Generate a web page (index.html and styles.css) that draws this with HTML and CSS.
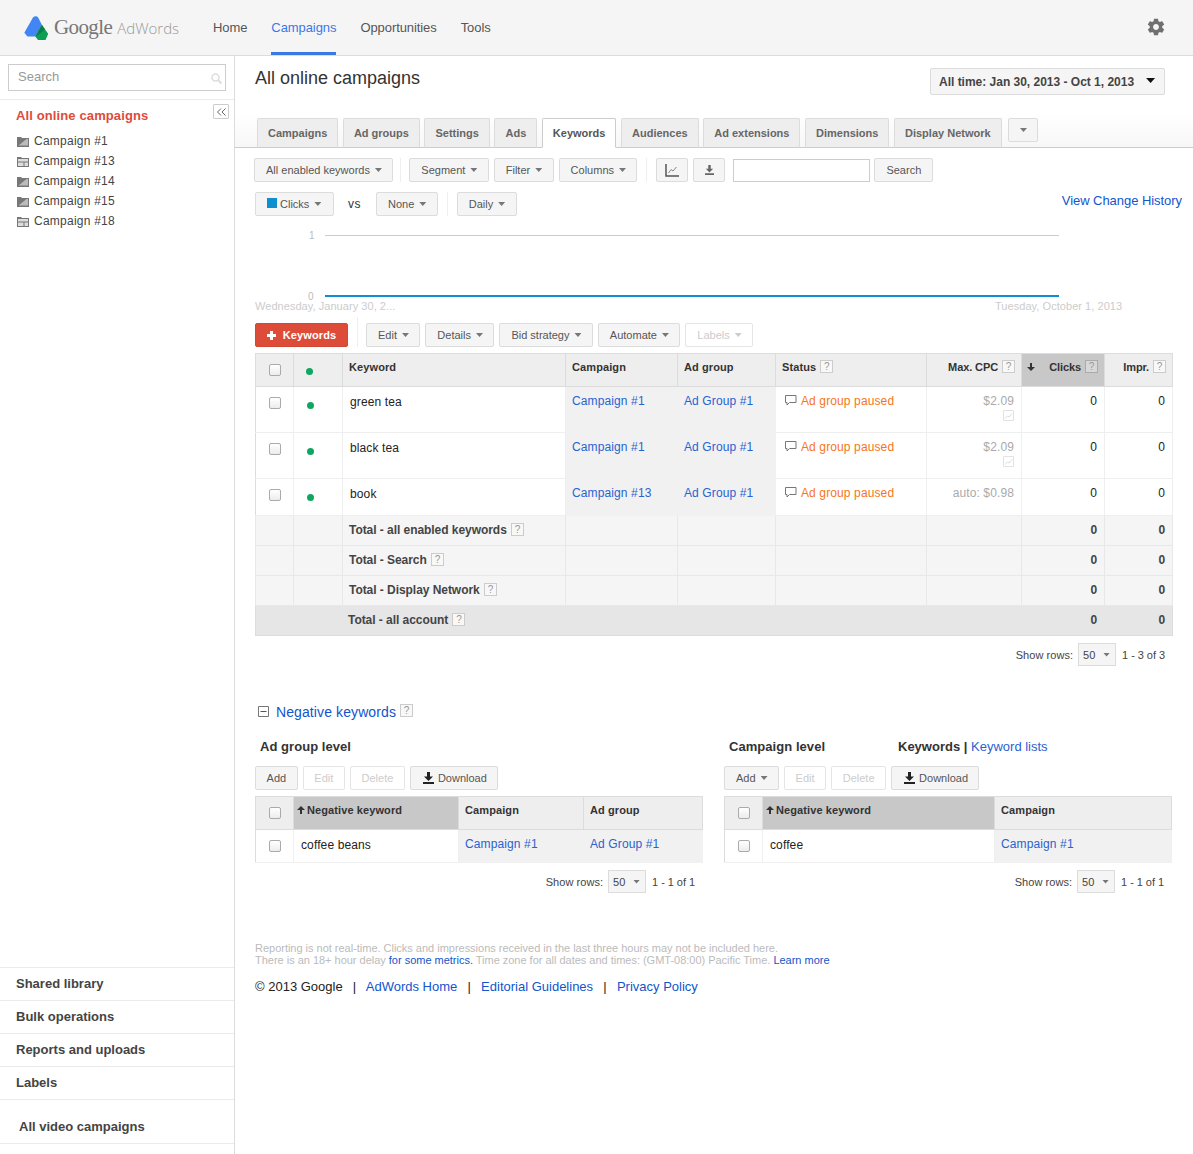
FILE: index.html
```html
<!DOCTYPE html>
<html lang="en">
<head>
<meta charset="utf-8">
<title>Google AdWords</title>
<link rel="stylesheet" href="styles.css">
</head>
<body>
<svg class="defs" width="0" height="0">
  <symbol id="folder-a" viewBox="0 0 12 11"><path d="M0 1h4l1 1h7v9H0z" fill="#777"/><path d="M1.500 9.500 9.500 3h1.500v6.500z" fill="#bbb"/></symbol>
  <symbol id="folder-b" viewBox="0 0 12 11"><path d="M0 1h4l1 1h7v9H0z" fill="#777"/><path d="M1 3h10v2.500H1zM1 6.500h5.500v3.500H1zM7.500 6.500H11v3.500H7.500z" fill="#ddd"/></symbol>
  <symbol id="bubble" viewBox="0 0 12 12"><path d="M.5 1.500h10.500v7H4.500L2 11V8.500H.5z" fill="none" stroke="#777"/></symbol>
  <symbol id="spark" viewBox="0 0 11 11"><path d="M.5.500h10v10H.5z" fill="none" stroke="#e2e2e2"/><path d="M2 8.500 4.500 6l1.500 1L9 3.500" fill="none" stroke="#dcdcdc"/></symbol>
  <symbol id="down" viewBox="0 0 11 12"><path d="M4 0h3v4.500h3L5.500 9 1 4.500h3zM0 10h11v2H0z" fill="#222"/></symbol>
  <symbol id="sort-down" viewBox="0 0 8 8"><path d="M3 0h2v4h3L4 8 0 4h3z" fill="#333"/></symbol>
  <symbol id="sort-up" viewBox="0 0 8 8"><path d="M3 8h2V4h3L4 0 0 4h3z" fill="#333"/></symbol>
</svg>

<header class="topbar">
  <div class="brand">
    <svg class="brand-mark" width="25" height="25" viewBox="0 0 25 25">
      <path d="M9 1.500c1.500-1.700 4.200-1.600 5.300.300l3.500 7-6.500 11.700H3.500L.3 16.800z" fill="#4285f4"/>
      <path d="M17.800 8.800 24.200 17.800 21.500 24H14l-2.700-3.500z" fill="#0f9d58"/>
      <path d="M17.800 8.800 21 13.500l-9 7-.7 0z" fill="#0b8043"/>
    </svg>
    <span class="brand-google">Google</span>
    <span class="brand-product">AdWords</span>
  </div>
  <nav class="topnav">
    <a class="topnav-item">Home</a>
    <a class="topnav-item is-active">Campaigns</a>
    <a class="topnav-item">Opportunities</a>
    <a class="topnav-item">Tools</a>
  </nav>
  <svg class="gear" width="20" height="20" viewBox="0 0 24 24"><path fill="#6f6f6f" d="M19.430 12.980c.04-.32.07-.64.07-.98s-.03-.66-.07-.98l2.110-1.650c.19-.15.24-.42.12-.64l-2-3.460c-.12-.22-.39-.3-.61-.22l-2.490 1c-.52-.4-1.080-.73-1.690-.98l-.38-2.650C14.460 2.180 14.250 2 14 2h-4c-.25 0-.46.18-.49.42l-.38 2.650c-.61.25-1.170.59-1.690.98l-2.490-1c-.23-.09-.49 0-.61.22l-2 3.460c-.13.22-.07.49.12.64l2.110 1.650c-.04.32-.07.65-.07.98s.03.66.07.98l-2.110 1.650c-.19.15-.24.42-.12.64l2 3.460c.12.22.39.3.61.22l2.490-1c.52.4 1.080.73 1.690.98l.38 2.650c.03.24.24.42.49.42h4c.25 0 .46-.18.49-.42l.38-2.650c.61-.25 1.170-.59 1.690-.98l2.490 1c.23.09.49 0 .61-.22l2-3.460c.12-.22.07-.49-.12-.64l-2.110-1.650zM12 15.500c-1.930 0-3.500-1.570-3.500-3.500s1.570-3.500 3.500-3.500 3.500 1.570 3.500 3.500-1.570 3.500-3.500 3.500z"/></svg>
</header>

<div class="shell">
  <aside class="sidebar">
    <div class="side-search">
      <div class="side-search-box">
        <span>Search</span>
        <svg width="11" height="11" viewBox="0 0 11 11"><circle cx="4.500" cy="4.500" r="3.500" fill="none" stroke="#ddd" stroke-width="1.500"/><path d="M7 7l3.500 3.500" stroke="#ddd" stroke-width="2"/></svg>
      </div>
    </div>
    <div class="side-tree">
      <button class="collapse" aria-label="Collapse"><svg width="9" height="8" viewBox="0 0 9 8"><path d="M4 .500.500 4 4 7.500M8.500 .500 5 4l3.500 3.500" fill="none" stroke="#666"/></svg></button>
      <div class="side-title">All online campaigns</div>
      <div class="side-row"><svg class="side-icon"><use href="#folder-a"/></svg>Campaign #1</div>
      <div class="side-row"><svg class="side-icon"><use href="#folder-b"/></svg>Campaign #13</div>
      <div class="side-row"><svg class="side-icon"><use href="#folder-a"/></svg>Campaign #14</div>
      <div class="side-row"><svg class="side-icon"><use href="#folder-a"/></svg>Campaign #15</div>
      <div class="side-row"><svg class="side-icon"><use href="#folder-b"/></svg>Campaign #18</div>
    </div>
    <div class="side-bottom">
      <div class="side-link">Shared library</div>
      <div class="side-link">Bulk operations</div>
      <div class="side-link">Reports and uploads</div>
      <div class="side-link">Labels</div>
      <div class="side-link side-video">All video campaigns</div>
    </div>
  </aside>

  <main class="main">
    <div class="title-row">
      <h1 class="page-title">All online campaigns</h1>
      <button class="date-btn">All time: Jan 30, 2013 - Oct 1, 2013<i class="caret caret-dark"></i></button>
    </div>

    <div class="tabbar">
      <a class="tab">Campaigns</a>
      <a class="tab">Ad groups</a>
      <a class="tab">Settings</a>
      <a class="tab">Ads</a>
      <a class="tab is-active">Keywords</a>
      <a class="tab">Audiences</a>
      <a class="tab">Ad extensions</a>
      <a class="tab">Dimensions</a>
      <a class="tab">Display Network</a>
      <button class="btn tab-more" aria-label="More tabs"><i class="caret"></i></button>
    </div>

    <div class="content">
      <div class="toolbar toolbar-first">
        <button class="btn">All enabled keywords<i class="caret"></i></button>
        <span class="sep"></span>
        <button class="btn">Segment<i class="caret"></i></button>
        <button class="btn">Filter<i class="caret"></i></button>
        <button class="btn">Columns<i class="caret"></i></button>
        <span class="sep"></span>
        <button class="btn btn-icon" aria-label="Chart"><svg width="14" height="13" viewBox="0 0 14 13"><path d="M1 0v12h13" fill="none" stroke="#555" stroke-width="1.500"/><path d="M3.500 9 6 5.500l2 1.500 3.500-4" fill="none" stroke="#888"/></svg></button>
        <button class="btn btn-icon" aria-label="Download"><svg class="icon-muted" width="9" height="10" viewBox="0 0 11 12"><path d="M4 0h3v4.500h3L5.500 9 1 4.500h3zM0 10h11v2H0z"/></svg></button>
        <input class="search-input" type="text" aria-label="Search keywords">
        <button class="btn">Search</button>
      </div>
      <div class="toolbar toolbar-second">
        <button class="btn btn-metric"><i class="swatch"></i>Clicks<i class="caret"></i></button>
        <span class="vs">vs</span>
        <button class="btn">None<i class="caret"></i></button>
        <span class="sep"></span>
        <button class="btn">Daily<i class="caret"></i></button>
        <a class="history link">View Change History</a>
      </div>

      <svg class="chart" width="938" height="93" viewBox="0 0 938 93">
        <text class="chart-axis" x="54" y="17">1</text>
        <text class="chart-axis" x="53" y="78">0</text>
        <line x1="70" x2="804" y1="13.500" y2="13.500" stroke="#ccc"/>
        <line x1="70" x2="804" y1="74" y2="74" stroke="#0e8fd0" stroke-width="2"/>
        <text class="chart-date" x="0" y="88">Wednesday, January 30, 2...</text>
        <text class="chart-date" x="740" y="88">Tuesday, October 1, 2013</text>
      </svg>

      <div class="toolbar toolbar-actions">
        <button class="btn btn-red"><svg width="9" height="9" viewBox="0 0 9 9"><path d="M3 0h3v3h3v3H6v3H3V6H0V3h3z" fill="#fff"/></svg>Keywords</button>
        <span class="sep sep-tall"></span>
        <button class="btn">Edit<i class="caret"></i></button>
        <button class="btn">Details<i class="caret"></i></button>
        <button class="btn">Bid strategy<i class="caret"></i></button>
        <button class="btn">Automate<i class="caret"></i></button>
        <button class="btn btn-off">Labels<i class="caret"></i></button>
      </div>

      <table class="grid grid-main">
        <colgroup><col class="c38"><col class="c49"><col class="c223"><col class="c112"><col class="c98"><col class="c151"><col class="c95"><col class="c83"><col class="c68"></colgroup>
        <thead>
          <tr class="head">
            <th class="cb"><input type="checkbox" class="check" aria-label="Select all"></th>
            <th class="dotcell"><i class="dot"></i></th>
            <th>Keyword</th>
            <th>Campaign</th>
            <th>Ad group</th>
            <th>Status <span class="help">?</span></th>
            <th class="num">Max. CPC <span class="help">?</span></th>
            <th class="num sorted"><svg class="sort-arrow" width="8" height="8"><use href="#sort-down"/></svg>Clicks <span class="help">?</span></th>
            <th class="num">Impr. <span class="help">?</span></th>
          </tr>
        </thead>
        <tbody>
          <tr class="row row-tall">
            <td class="cb"><input type="checkbox" class="check" aria-label="Select"></td>
            <td class="dotcell"><i class="dot"></i></td>
            <td class="kw">green tea</td>
            <td class="shade"><a class="link">Campaign #1</a></td>
            <td class="shade"><a class="link">Ad Group #1</a></td>
            <td class="status"><svg width="12" height="12"><use href="#bubble"/></svg>Ad group paused</td>
            <td class="cpc">$2.09<svg class="spark" width="11" height="11"><use href="#spark"/></svg></td>
            <td class="val">0</td>
            <td class="val">0</td>
          </tr>
          <tr class="row row-tall">
            <td class="cb"><input type="checkbox" class="check" aria-label="Select"></td>
            <td class="dotcell"><i class="dot"></i></td>
            <td class="kw">black tea</td>
            <td class="shade"><a class="link">Campaign #1</a></td>
            <td class="shade"><a class="link">Ad Group #1</a></td>
            <td class="status"><svg width="12" height="12"><use href="#bubble"/></svg>Ad group paused</td>
            <td class="cpc">$2.09<svg class="spark" width="11" height="11"><use href="#spark"/></svg></td>
            <td class="val">0</td>
            <td class="val">0</td>
          </tr>
          <tr class="row row-short">
            <td class="cb"><input type="checkbox" class="check" aria-label="Select"></td>
            <td class="dotcell"><i class="dot"></i></td>
            <td class="kw">book</td>
            <td class="shade"><a class="link">Campaign #13</a></td>
            <td class="shade"><a class="link">Ad Group #1</a></td>
            <td class="status"><svg width="12" height="12"><use href="#bubble"/></svg>Ad group paused</td>
            <td class="cpc">auto: $0.98</td>
            <td class="val">0</td>
            <td class="val">0</td>
          </tr>
          <tr class="total">
            <td></td><td></td><td class="total-name">Total - all enabled keywords <span class="help">?</span></td><td></td><td></td><td></td><td></td><td class="val">0</td><td class="val">0</td>
          </tr>
          <tr class="total">
            <td></td><td></td><td class="total-name">Total - Search <span class="help">?</span></td><td></td><td></td><td></td><td></td><td class="val">0</td><td class="val">0</td>
          </tr>
          <tr class="total">
            <td></td><td></td><td class="total-name">Total - Display Network <span class="help">?</span></td><td></td><td></td><td></td><td></td><td class="val">0</td><td class="val">0</td>
          </tr>
          <tr class="total total-account">
            <td colspan="7" class="account-name">Total - all account <span class="help">?</span></td><td class="val">0</td><td class="val">0</td>
          </tr>
        </tbody>
      </table>

      <div class="pager pager-main">
        <span>Show rows:</span>
        <span class="select">50<i class="caret"></i></span>
        <span class="pager-count">1 - 3 of 3</span>
      </div>

      <div class="neg-head">
        <svg width="11" height="11" viewBox="0 0 11 11"><path d="M.5.500h10v10H.5z" fill="#fff" stroke="#777"/><path d="M2.500 5.500h6" stroke="#555"/></svg>
        <a class="link neg-title">Negative keywords</a>
        <span class="help">?</span>
      </div>

      <div class="neg-cols">
        <section class="neg-col">
          <h2 class="neg-level">Ad group level</h2>
          <div class="toolbar">
            <button class="btn btn-plain">Add</button>
            <button class="btn btn-plain btn-off">Edit</button>
            <button class="btn btn-plain btn-off">Delete</button>
            <button class="btn btn-download"><svg class="btn-down" width="11" height="12"><use href="#down"/></svg>Download</button>
          </div>
          <table class="grid grid-neg">
            <colgroup><col class="c38"><col class="c165"><col class="c125"><col></colgroup>
            <thead>
              <tr class="head">
                <th class="cb"><input type="checkbox" class="check" aria-label="Select all"></th>
                <th class="sorted sorted-left"><svg width="8" height="8"><use href="#sort-up"/></svg>Negative keyword</th>
                <th>Campaign</th>
                <th>Ad group</th>
              </tr>
            </thead>
            <tbody>
              <tr class="row row-neg">
                <td class="cb"><input type="checkbox" class="check" aria-label="Select"></td>
                <td class="kw">coffee beans</td>
                <td class="shade shade-flat"><a class="link">Campaign #1</a></td>
                <td class="shade shade-flat"><a class="link">Ad Group #1</a></td>
              </tr>
            </tbody>
          </table>
          <div class="pager pager-neg">
            <span>Show rows:</span>
            <span class="select">50<i class="caret"></i></span>
            <span class="pager-count">1 - 1 of 1</span>
          </div>
        </section>

        <section class="neg-col">
          <div class="neg-level-row">
            <h2 class="neg-level neg-level-fixed">Campaign level</h2>
            <span class="neg-switch"><b>Keywords</b> <b class="bar">|</b> <a class="link">Keyword lists</a></span>
          </div>
          <div class="toolbar">
            <button class="btn">Add<i class="caret"></i></button>
            <button class="btn btn-plain btn-off">Edit</button>
            <button class="btn btn-plain btn-off">Delete</button>
            <button class="btn btn-download"><svg class="btn-down" width="11" height="12"><use href="#down"/></svg>Download</button>
          </div>
          <table class="grid grid-neg">
            <colgroup><col class="c38"><col class="c232"><col></colgroup>
            <thead>
              <tr class="head">
                <th class="cb"><input type="checkbox" class="check" aria-label="Select all"></th>
                <th class="sorted sorted-left"><svg width="8" height="8"><use href="#sort-up"/></svg>Negative keyword</th>
                <th>Campaign</th>
              </tr>
            </thead>
            <tbody>
              <tr class="row row-neg">
                <td class="cb"><input type="checkbox" class="check" aria-label="Select"></td>
                <td class="kw">coffee</td>
                <td class="shade shade-flat"><a class="link">Campaign #1</a></td>
              </tr>
            </tbody>
          </table>
          <div class="pager pager-neg">
            <span>Show rows:</span>
            <span class="select">50<i class="caret"></i></span>
            <span class="pager-count">1 - 1 of 1</span>
          </div>
        </section>
      </div>

      <p class="note">Reporting is not real-time. Clicks and impressions received in the last three hours may not be included here.<br>There is an 18+ hour delay <a class="link">for some metrics.</a> Time zone for all dates and times: (GMT-08:00) Pacific Time. <a class="link">Learn more</a></p>

      <p class="legal">© 2013 Google <span class="pipe">|</span> <a class="link">AdWords Home</a> <span class="pipe">|</span> <a class="link">Editorial Guidelines</a> <span class="pipe">|</span> <a class="link">Privacy Policy</a></p>
    </div>
  </main>
</div>
</body>
</html>
```
FILE: styles.css
```css
* { box-sizing: border-box; }
html, body { margin: 0; height: 100%; }
body {
  display: flex;
  flex-direction: column;
  height: 1154px;
  overflow: hidden;
  background: #fff;
  color: #333;
  font: 12px "Liberation Sans", Arial, sans-serif;
}
.defs { position: absolute; }
h1, h2, p { margin: 0; font-weight: normal; }
i { font-style: normal; }
.link { color: #1155cc; text-decoration: none; }

/* top bar */
.topbar {
  display: flex;
  align-items: stretch;
  height: 56px;
  flex: none;
  background: #f5f5f5;
  border-bottom: 1px solid #dcdcdc;
  padding-left: 24px;
}
.brand { display: flex; align-items: center; width: 189px; }
.brand-mark { margin-top: 1px; }
.brand-google {
  margin-left: 5px;
  font: 21px "Liberation Serif", serif;
  letter-spacing: -.6px;
  color: #777;
}
.brand-product {
  margin-left: 5px;
  margin-top: 1px;
  font: 300 15px "Open Sans", sans-serif;
  color: #999;
}
.topnav { display: flex; gap: 24px; }
.topnav-item {
  display: flex;
  align-items: center;
  height: 55px;
  padding-top: 3px;
  font-size: 13px;
  letter-spacing: -.08px;
  color: #555;
  border-bottom: 3px solid transparent;
}
.topnav-item.is-active { color: #3b78e7; border-bottom-color: #3b78e7; }
.gear { margin-left: auto; margin-right: 27px; margin-top: 17px; }

/* shell */
.shell { display: flex; flex: 1; min-height: 0; }

/* sidebar */
.sidebar {
  display: flex;
  flex-direction: column;
  flex: none;
  width: 235px;
  border-right: 1px solid #dcdcdc;
}
.side-search { height: 44px; padding: 8px 8px 0; border-bottom: 1px solid #ebebeb; }
.side-search-box {
  display: flex;
  align-items: center;
  justify-content: space-between;
  width: 218px;
  height: 27px;
  padding: 0 3px 2px 9px;
  border: 1px solid #ccc;
  font-size: 13px;
  color: #999;
}
.side-search-box svg { margin-top: 4px; }
.side-tree { position: relative; flex: 1; padding: 8px 0 0 16px; }
.collapse {
  position: absolute;
  top: 4px;
  left: 213px;
  display: flex;
  align-items: center;
  justify-content: center;
  width: 16px;
  height: 15px;
  padding: 0;
  border: 1px solid #ccc;
  border-radius: 1px;
  background: #fff;
}
.side-title {
  height: 16px;
  margin-bottom: 7px;
  font-size: 13px;
  line-height: 16px;
  font-weight: bold;
  letter-spacing: .12px;
  color: #dd4b39;
}
.side-row {
  display: flex;
  align-items: center;
  height: 20px;
  letter-spacing: .24px;
  color: #444;
}
.side-icon { width: 12px; height: 11px; margin: 0 5px 0 1px; }
.side-bottom { flex: none; padding-bottom: 10px; }
.side-link {
  height: 33px;
  padding: 8px 16px 0;
  border-top: 1px solid #ebebeb;
  font-size: 13px;
  line-height: 16px;
  font-weight: bold;
  color: #444;
}
.side-video {
  height: 45px;
  padding: 19px 19px 0;
  border-bottom: 1px solid #ebebeb;
}

/* main */
.main { flex: 1; min-width: 0; }
.title-row {
  display: flex;
  justify-content: space-between;
  align-items: flex-start;
  height: 44px;
  padding: 12px 28px 0 20px;
}
.page-title { font-size: 18px; line-height: 21px; color: #333; }
.date-btn {
  display: flex;
  align-items: center;
  width: 235px;
  height: 27px;
  padding: 1px 0 0 8px;
  border: 1px solid #dcdcdc;
  border-radius: 2px;
  background: #f5f5f5;
  font: bold 12px "Liberation Sans", sans-serif;
  letter-spacing: -.01px;
  color: #444;
}
.caret {
  display: inline-block;
  flex: none;
  width: 7px;
  height: 4px;
  margin-left: 5px;
  background: #777;
  clip-path: polygon(0 0, 100% 0, 50% 100%);
}
.caret-dark { width: 9px; height: 5px; margin: 0 0 3px 12px; background: #111; }

/* tabs */
.tabbar {
  display: flex;
  align-items: flex-end;
  gap: 4.600px;
  height: 48px;
  padding-left: 22px;
  border-bottom: 1px solid #ccc;
  background: linear-gradient(#fff, #fff 30%, #f7f7f7);
}
.tab {
  display: flex;
  align-items: center;
  height: 30px;
  margin-bottom: -1px;
  padding: 0 10px;
  border: 1px solid #dcdcdc;
  border-bottom-color: #ccc;
  border-radius: 2px 2px 0 0;
  background: #eee;
  font-size: 11px;
  font-weight: bold;
  color: #666;
}
.tab.is-active {
  background: #fff;
  color: #555;
  border-color: #ccc;
  border-bottom-color: #fff;
}
.tab-more { width: 30px; height: 24px; margin: 0 0 5px 2px; padding: 0; justify-content: center; }
.tab-more .caret { margin: 0; }

/* buttons */
.btn {
  display: inline-flex;
  align-items: center;
  height: 24px;
  padding: 0 10.400px 0 11px;
  border: 1px solid #dcdcdc;
  border-radius: 2px;
  background: #f5f5f5;
  font: 11px "Liberation Sans", sans-serif;
  color: #555;
  white-space: nowrap;
}
.btn-icon { width: 32px; justify-content: center; padding: 0; }
.btn-metric { width: 79px; }
.btn-plain { padding: 0 10.600px; }
.btn-download { width: 88px; padding: 0 0 0 12px; }
.btn-off { background: #fff; color: #ccc; border-color: #e5e5e5; }
.btn-off .caret { background: #ccc; }
.btn-red {
  width: 93px;
  padding: 0;
  justify-content: center;
  gap: 7px;
  background: #dd4b39;
  border-color: #d14836;
  color: #fff;
  font-weight: bold;
  letter-spacing: .1px;
}
.btn-down { margin-right: 4px; }
.icon-muted { fill: #666; }
.swatch { display: inline-block; width: 10px; height: 10px; margin-right: 3px; margin-top: -3px; background: #0e8fd0; }

/* toolbars */
.content { padding-left: 20px; }
.toolbar { display: flex; align-items: center; gap: 5px; height: 24px; }
.toolbar-first { margin-top: 10px; margin-left: -1px; }
.toolbar-second { margin-top: 10px; }
.toolbar-actions { margin-top: 8px; }
.sep { width: 1px; height: 24px; margin: 0 4px; background: #eee; }
.toolbar-first .sep:first-of-type { margin: 0 3px 0 2px; }
.sep-tall { height: 30px; margin: -6px 3px 0 4px; }
.search-input { width: 137px; height: 23px; margin-left: 3px; margin-right: -1px; padding: 0; border: 1px solid #ccc; background: #fff; }
.vs { width: 13px; margin: 0 10px 0 9px; font-size: 12px; letter-spacing: .5px; }
.history { margin-left: auto; margin-right: 11px; margin-top: -8px; font-size: 13px; letter-spacing: -.05px; }

/* chart */
.chart { display: block; margin-top: 6px; }
.chart-axis { font: 10px "Liberation Sans", sans-serif; fill: #bbb; }
.chart-date { font: 11px "Liberation Sans", sans-serif; letter-spacing: .05px; fill: #ccc; }

/* tables */
.grid {
  table-layout: fixed;
  border-collapse: collapse;
  font-size: 12px;
  color: #222;
}
.grid-main { width: 918px; margin-top: 6px; }
.grid-neg { width: 448px; margin-top: 6px; }
.c38 { width: 38px; } .c49 { width: 49px; } .c223 { width: 223px; } .c112 { width: 112px; }
.c98 { width: 98px; } .c151 { width: 151px; } .c95 { width: 95px; } .c83 { width: 83px; }
.c68 { width: 68px; } .c165 { width: 165px; } .c125 { width: 125px; } .c232 { width: 232px; }
.grid th, .grid td { border: 1px solid #efefef; padding: 0; vertical-align: top; }
.head { height: 33px; }
.grid th {
  background: #eee;
  border-color: #dcdcdc;
  padding: 6px 6px 0;
  text-align: left;
  font-size: 11px;
  line-height: 14px;
  letter-spacing: .1px;
  color: #333;
}
.grid th.num { text-align: right; letter-spacing: -.1px; }
.grid th.sorted { position: relative; background: #c8c8c8; }
.grid th.sorted-left { padding-left: 3px; }
.sort-arrow { position: absolute; left: 5px; top: 9px; }
.sorted-left svg { margin-right: 2px; }
.grid th.cb, .grid td.cb, .grid th.dotcell, .grid td.dotcell { padding: 0; text-align: left; }
.check {
  display: block;
  appearance: none;
  width: 12px;
  height: 12px;
  margin: 10px 0 0 13px;
  border: 1px solid #aaa;
  border-radius: 2px;
  background: linear-gradient(#fff, #ececec);
}
.grid td.cb { border-left-color: #dcdcdc; }
.dot {
  display: block;
  width: 7px;
  height: 7px;
  margin: 14px 0 0 12px;
  border-radius: 50%;
  background: #0fa660;
}
.row .dot { margin-top: 15px; margin-left: 13px; }
.row-tall { height: 46px; }
.row-short { height: 37px; }
.row-neg { height: 33px; }
.grid td.kw { padding: 8px 7px 0; }
.grid td.shade { background: #f1f1f1; border-color: #f1f1f1; padding: 7px 6px 0; }
.grid td.shade .link { color: #2a62d0; }
.grid td.status { padding: 7px 9px 0; color: #f5751f; white-space: nowrap; }
.status svg { margin-right: 4px; vertical-align: -1px; }
.grid td.cpc { padding: 7px 7px 0; text-align: right; color: #aaa; }
.spark { display: block; margin: 2px 0 0 auto; }
.grid td.val { padding: 7px 7px 0; text-align: right; }
.row td.status, .row td.kw, .row td.shade, .row td.cpc, .row td.val { line-height: 14px; letter-spacing: .12px; }

.total { height: 30px; }
.grid .total td { background: #f5f5f5; border-color: #e8e8e8; padding: 7px 6px 0; font-weight: bold; color: #444; letter-spacing: -.05px; }
.grid .total td.val { padding-right: 7px; }
.grid .total-account td { background: #e6e6e6; border-color: #dcdcdc; border-left-color: #e6e6e6; border-right-color: #e6e6e6; }
.grid .total-account td.account-name { padding-left: 92px; border-left-color: #dcdcdc; }
.grid .total-account td:last-child { border-right-color: #dcdcdc; }

.help {
  display: inline-block;
  width: 13px;
  height: 13px;
  margin-left: 1px;
  border: 1px solid #ccc;
  background: #f8f8f8;
  font-size: 10px;
  line-height: 11px;
  font-weight: normal;
  text-align: center;
  letter-spacing: 0;
  color: #999;
  vertical-align: 1px;
}
.sorted .help { background: #d8d8d8; border-color: #aaa; }

/* pager */
.pager {
  display: flex;
  align-items: center;
  justify-content: flex-end;
  gap: 5px;
  height: 23px;
  font-size: 11px;
  letter-spacing: .05px;
  color: #444;
}
.pager-main { width: 910px; margin-top: 7px; }
.pager-neg { width: 440px; margin-top: 7px; }
.pager-count { letter-spacing: -.05px; }
.select {
  display: flex;
  align-items: center;
  justify-content: space-between;
  width: 38px;
  height: 23px;
  margin-right: 1px;
  padding: 0 5px 0 4px;
  border: 1px solid #dcdcdc;
  background: #f5f5f5;
}
.select .caret { margin: 0; }

/* negative keywords */
.neg-head {
  display: flex;
  align-items: center;
  height: 17px;
  margin: 37px 0 0 3px;
  gap: 7px;
}
.neg-title { font-size: 14px; letter-spacing: .1px; }
.neg-head .help { margin-left: -3px; margin-top: -3px; }
.neg-cols { display: flex; gap: 21px; margin-top: 19px; }
.neg-col { width: 448px; }
.neg-level {
  height: 16px;
  margin: 0 0 11px 5px;
  font-size: 13px;
  line-height: 16px;
  font-weight: bold;
  letter-spacing: .05px;
  color: #333;
}
.neg-level-row { display: flex; }
.neg-level-fixed { width: 169px; }
.neg-switch { font-size: 13px; line-height: 16px; }
.neg-switch b { color: #333; }
.neg-switch .link { color: #2a62d0; }

/* footer */
.note { margin-top: 49px; font-size: 11px; line-height: 12px; letter-spacing: -.015px; color: #bbb; }
.legal { margin-top: 13px; font-size: 13px; line-height: 16px; color: #222; }
.pipe { margin: 0 6.600px; }
```
